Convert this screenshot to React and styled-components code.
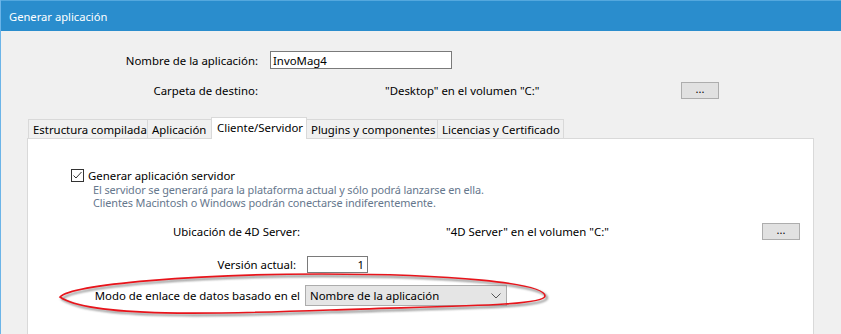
import React from "react";
import styled, { createGlobalStyle } from "styled-components";

const Global = createGlobalStyle`
  html, body { margin: 0; padding: 0; background: #f0f0f0; }
  body { font-family: "Noto Sans", "Liberation Sans", sans-serif; font-size: 11.4px; color: #000; }
  * { box-sizing: border-box; }
`;

const Window = styled.div`
  position: relative;
  width: 841px;
  height: 334px;
  overflow: hidden;
  background: #f0f0f0;
  border-left: 1px solid #6bb4e8;
  display: flex;
  flex-direction: column;
`;

const TitleBar = styled.div`
  height: 31px;
  flex: none;
  background: #2a8dcd;
  border-top: 1px solid #54a8de;
  color: #fff;
  font-size: 11.2px;
  display: flex;
  align-items: center;
  padding-left: 8px;
`;

const Row = styled.div`
  display: flex;
  align-items: center;
  height: ${(p) => p.$h}px;
  margin-top: ${(p) => p.$mt}px;
  flex: none;
`;

const Label = styled.div`
  width: ${(p) => p.$w}px;
  text-align: right;
  white-space: nowrap;
  flex: none;
`;

const Value = styled.div`
  width: ${(p) => p.$w}px;
  margin-left: ${(p) => p.$ml}px;
  white-space: nowrap;
  flex: none;
`;

const TextInput = styled.div`
  width: ${(p) => p.$w}px;
  height: ${(p) => p.$h}px;
  margin-left: ${(p) => p.$ml}px;
  background: #fff;
  border: 1px solid #7a7a7a;
  display: flex;
  align-items: center;
  justify-content: ${(p) => (p.$right ? "flex-end" : "flex-start")};
  padding: 0 3px 0 2px;
  flex: none;
`;

const Button = styled.div`
  width: 38px;
  height: 17px;
  margin-left: ${(p) => p.$ml || 0}px;
  background: #e1e1e1;
  border: 1px solid #adadad;
  display: flex;
  align-items: center;
  justify-content: center;
  font-size: 11px;
  line-height: 1;
  padding-bottom: 4px;
  flex: none;
`;

const TabStrip = styled.div`
  display: flex;
  align-items: flex-end;
  height: 22px;
  margin-top: 18px;
  margin-left: 27px;
  margin-bottom: -1px;
  position: relative;
  z-index: 1;
  flex: none;
`;

const Tab = styled.div`
  width: ${(p) => p.$w}px;
  height: ${(p) => (p.$active ? 22 : 20)}px;
  margin-left: -1px;
  &:first-child { margin-left: 0; }
  background: ${(p) => (p.$active ? "#fff" : "#f0f0f0")};
  border: 1px solid #d9d9d9;
  border-bottom: ${(p) => (p.$active ? "none" : "1px solid #d9d9d9")};
  display: flex;
  align-items: ${(p) => (p.$active ? "flex-start" : "center")};
  padding: ${(p) => (p.$active ? "2px 0 0 5px" : "0 0 0 4px")};
  white-space: nowrap;
  position: relative;
  z-index: ${(p) => (p.$active ? 2 : 1)};
`;

const Panel = styled.div`
  position: relative;
  margin-left: 26px;
  width: 787px;
  flex: 1;
  background: #fff;
  border: 1px solid #d9d9d9;
  border-bottom: none;
  display: flex;
  flex-direction: column;
`;

const CheckRow = styled.div`
  display: flex;
  align-items: center;
  height: 16px;
  margin-top: 28px;
  padding-left: 43px;
  gap: 4px;
`;

const Box = styled.div`
  width: 13px;
  height: 13px;
  border: 1px solid #333;
  background: #fff;
  display: flex;
  align-items: center;
  justify-content: center;
`;

const Description = styled.div`
  padding-left: 65px;
  color: #66778d;
  font-size: 10.9px;
  letter-spacing: -0.1px;
  line-height: 13px;
`;

const Select = styled.div`
  width: 202px;
  height: 21px;
  margin-left: 5px;
  background: #e5e5e5;
  border: 1px solid #acacac;
  display: flex;
  align-items: center;
  justify-content: space-between;
  padding: 0 5px 0 4px;
  flex: none;
`;

const Highlight = styled.svg`
  position: absolute;
  left: 0;
  top: 0;
  pointer-events: none;
  overflow: visible;
`;

const ELLIPSE =
  "M60 297 C72 284 200 274 322 274 C450 274 545 283 545 296 C545 306 450 306 330 310 C220 314 90 318 60 297 Z";

export default function App() {
  return (
    <>
      <Global />
      <Window>
        <TitleBar>Generar aplicación</TitleBar>
        <Row $h={18} $mt={20}>
          <Label $w={257}>Nombre de la aplicación:</Label>
          <TextInput $w={182} $h={18} $ml={12}>InvoMag4</TextInput>
        </Row>
        <Row $h={17} $mt={13}>
          <Label $w={257}>Carpeta de destino:</Label>
          <Value $w={296} $ml={127}>"Desktop" en el volumen "C:"</Value>
          <Button>...</Button>
        </Row>
        <TabStrip>
          <Tab $w={120}>Estructura compilada</Tab>
          <Tab $w={65}>Aplicación</Tab>
          <Tab $w={96} $active>Cliente/Servidor</Tab>
          <Tab $w={132}>Plugins y componentes</Tab>
          <Tab $w={127}>Licencias y Certificado</Tab>
        </TabStrip>
        <Panel>
          <CheckRow>
            <Box>
              <svg width="11" height="11" viewBox="0 0 11 11">
                <path d="M1.5 5.5 L4 8 L9.5 2" fill="none" stroke="#333" strokeWidth="1" />
              </svg>
            </Box>
            <span>Generar aplicación servidor</span>
          </CheckRow>
          <Description>
            El servidor se generará para la plataforma actual y sólo podrá lanzarse en ella.
            <br />
            Clientes Macintosh o Windows podrán conectarse indiferentemente.
          </Description>
          <Row $h={17} $mt={14}>
            <Label $w={272}>Ubicación de 4D Server:</Label>
            <Value $w={316} $ml={146}>"4D Server" en el volumen "C:"</Value>
            <Button>...</Button>
          </Row>
          <Row $h={17} $mt={16}>
            <Label $w={268}>Versión actual:</Label>
            <TextInput $w={61} $h={17} $ml={11} $right>1</TextInput>
          </Row>
          <Row $h={21} $mt={12}>
            <Label $w={272}>Modo de enlace de datos basado en el</Label>
            <Select>
              <span>Nombre de la aplicación</span>
              <svg width="10" height="6" viewBox="0 0 10 6">
                <path d="M0.5 0.5 L5 5 L9.5 0.5" fill="none" stroke="#555" strokeWidth="1" />
              </svg>
            </Select>
          </Row>
          <Highlight width="841" height="200" style={{ left: -28, top: -139 }}>
            <defs>
              <filter id="sh" x="-10%" y="-50%" width="120%" height="200%">
                <feGaussianBlur stdDeviation="1.2" />
              </filter>
            </defs>
            <path d={ELLIPSE} fill="none" stroke="#888" strokeWidth="2" filter="url(#sh)" transform="translate(2 2)" />
            <path d={ELLIPSE} fill="none" stroke="#e8141b" strokeWidth="1.6" />
          </Highlight>
        </Panel>
      </Window>
    </>
  );
}
